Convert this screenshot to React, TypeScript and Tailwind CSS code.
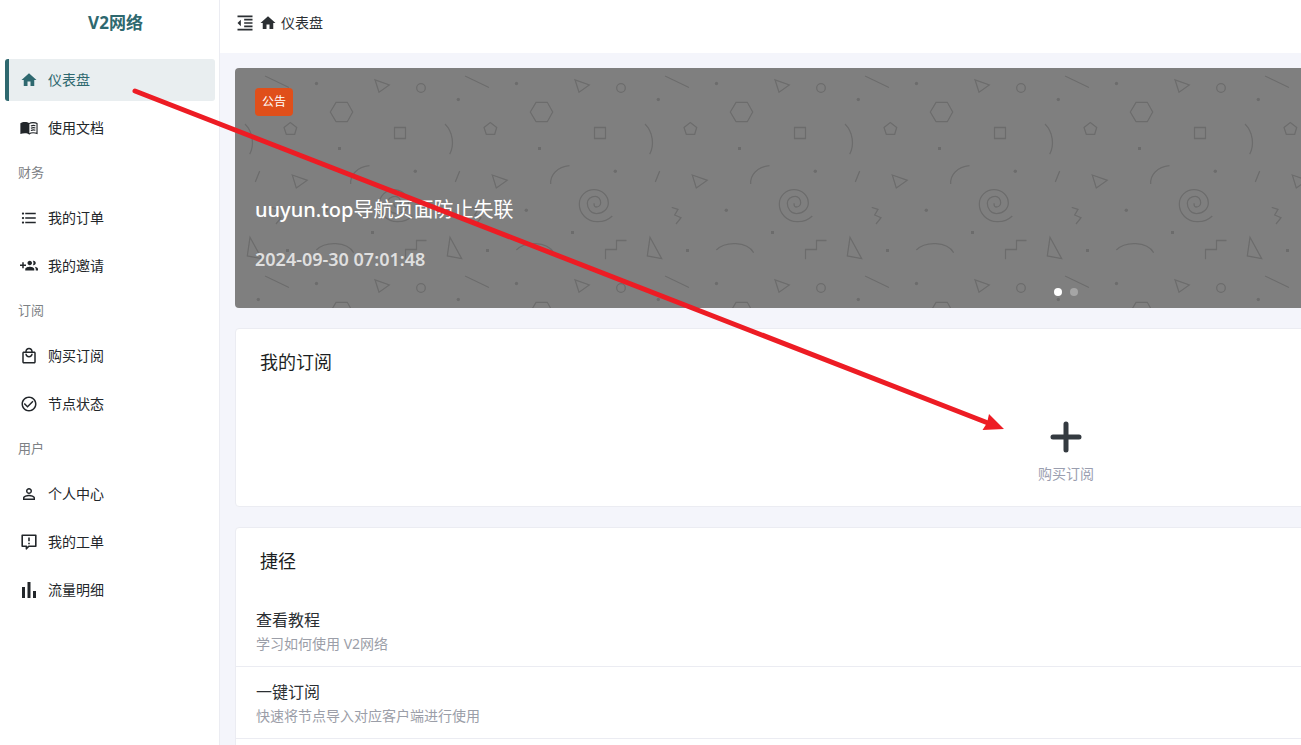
import type { ReactNode } from 'react'
import {
  MdCheckCircleOutline,
  MdFormatIndentDecrease,
  MdFormatListBulleted,
  MdHome,
  MdOutlineLocalMall,
  MdPersonOutline,
} from 'react-icons/md'

function BookIcon() {
  return (
    <svg viewBox="0 0 24 24" className="size-[18px]" fill="currentColor">
      <path d="M12.5 5.6C11 4.4 8.900 4 6.500 4S2.200 4.400 .5 5.600V20c1.600-.6 3.700-1 6-1 2.200 0 4.400.6 6 2z" />
      <path
        d="M12 6.200C13.500 5.200 15.500 4.800 17.500 4.800s4 .4 5.200 1.200v13.200c-1.400-.5-3.200-.8-5.200-.8s-4 .5-5.500 1.600"
        fill="none"
        stroke="currentColor"
        strokeWidth="1.500"
      />
      <path d="M14.500 9.300c2-.8 4.200-.9 6-.4M14.500 12.300c2-.8 4.200-.9 6-.4M14.500 15.300c2-.8 4.200-.9 6-.4" fill="none" stroke="currentColor" strokeWidth="1.500" />
    </svg>
  )
}

function InviteIcon() {
  return (
    <svg viewBox="0 0 24 24" className="size-[18px]" fill="currentColor">
      <path d="M8 10H5V7H3v3H0v2h3v3h2v-3h3v-2zm10 1c1.660 0 2.990-1.340 2.990-3S19.660 5 18 5c-.32 0-.63.05-.91.14.57.81.9 1.790.9 2.860s-.34 2.040-.9 2.860c.28.09.59.14.91.14zm-5 0c1.660 0 2.990-1.340 2.990-3S14.660 5 13 5c-1.660 0-3 1.340-3 3s1.340 3 3 3zm6.620 2.160c.83.73 1.380 1.660 1.380 2.840v2h3v-2c0-1.540-2.370-2.490-4.380-2.840zM13 13c-2 0-6 1-6 3v2h12v-2c0-2-4-3-6-3z" />
    </svg>
  )
}

function TicketIcon() {
  return (
    <svg viewBox="0 0 18 18" className="size-[18px]" fill="none" stroke="currentColor">
      <path d="M2.200 2.200h13.600v11H8.800L6.400 15.800v-2.600H2.200z" strokeWidth="1.600" strokeLinejoin="round" />
      <path d="M9 4.500v3.700M9 9.700v1.600" strokeWidth="1.600" />
    </svg>
  )
}

function TrafficIcon() {
  return (
    <svg viewBox="0 0 18 18" className="size-[18px]" fill="currentColor">
      <path d="M2 6h3v11H2zM7.500 1h3v16h-3zM13 10h3v7h-3z" />
    </svg>
  )
}

type NavItem = { label: string; icon: ReactNode; active?: boolean }

const groups: { title?: string; items: NavItem[] }[] = [
  {
    items: [
      { label: '仪表盘', icon: <MdHome size={18} />, active: true },
      { label: '使用文档', icon: <BookIcon /> },
    ],
  },
  {
    title: '财务',
    items: [
      { label: '我的订单', icon: <MdFormatListBulleted size={18} /> },
      { label: '我的邀请', icon: <InviteIcon /> },
    ],
  },
  {
    title: '订阅',
    items: [
      { label: '购买订阅', icon: <MdOutlineLocalMall size={18} /> },
      { label: '节点状态', icon: <MdCheckCircleOutline size={18} /> },
    ],
  },
  {
    title: '用户',
    items: [
      { label: '个人中心', icon: <MdPersonOutline size={18} /> },
      { label: '我的工单', icon: <TicketIcon /> },
      { label: '流量明细', icon: <TrafficIcon /> },
    ],
  },
]

const shortcuts = [
  { title: '查看教程', text: '学习如何使用 V2网络' },
  { title: '一键订阅', text: '快速将节点导入对应客户端进行使用' },
]

function Sidebar() {
  return (
    <aside className="w-[220px] shrink-0 border-r border-[#ebecf2] bg-white">
      <div className="flex h-[53px] items-center justify-center pb-2 pl-3 text-[17px] font-bold text-[#2e686f]">V2网络</div>
      <nav className="pt-[6px] pr-1 pl-[5px]">
        {groups.map((group, i) => (
          <div key={i}>
            {group.title && <div className="h-[42px] pl-[13px] pt-[5px] text-[13px] leading-6 text-[#7d8185]">{group.title}</div>}
            {group.items.map((item) => (
              <a
                key={item.label}
                href="#"
                className={
                  item.active
                    ? 'mb-[6px] flex h-[42px] items-center rounded-[3px] border-l-4 border-[#2e686f] bg-[#e9eef0] text-sm text-[#2e686f]'
                    : 'mb-[6px] flex h-[42px] items-center border-l-4 border-transparent text-sm text-[#22262a]'
                }
              >
                <span className="ml-[10px] flex w-5 justify-center">{item.icon}</span>
                <span className="ml-[9px]">{item.label}</span>
              </a>
            ))}
          </div>
        ))}
      </nav>
    </aside>
  )
}

function BannerPattern() {
  return (
    <svg className="absolute inset-0 size-full" aria-hidden="true">
      <defs>
        <pattern id="shapes" width="200" height="200" patternUnits="userSpaceOnUse">
          <g fill="none" stroke="#6c6c6c" strokeWidth="1.300">
            <path d="M30 8 54 19.500" />
            <path d="M140 11.800 154.300 17 144 24.300z" />
            <circle cx="186" cy="20" r="4.300" />
            <path d="M95.300 44 101 34.300h11.300L117.700 44l-5.400 9.700H101z" />
            <path d="M55.300 54.500 61.700 59.500 59.700 66.300h-8.400L49 59.500z" />
            <path d="M159.500 59.500h11v11h-11z" />
            <path d="M10 56C18 64 19.500 77 14.700 86.300" />
            <path d="M134.500 97.700C122 99 115 107 115.700 116" />
            <path d="M24.700 103 20.300 114" />
            <path d="M57.300 107 72.300 112.300 61.300 120z" />
            <path d="M159 135.300A2 3.700 0 0 0 161 139A4.700 4.300 0 0 0 165.700 134.700A5.400 6.400 0 0 0 160.300 128.300A8 7 0 0 0 152.300 135.300A9.200 10.400 0 0 0 161.500 145.700A11.800 10.700 0 0 0 173.300 135A14.300 13.300 0 0 0 159 121.700A14.700 14.300 0 0 0 144.300 136A17.700 17.700 0 0 0 162 153.700Q171 154 177.300 148" />
            <path d="M36.700 139.300 43 141.300 39.700 147 46 149.700 41 156" />
            <path d="M81.300 182C90 173 112 173 118.700 184.700" />
            <path d="M170.500 191.300v-9.800h11v-9h10" />
            <path d="M15 169.300 26.700 190.700 12.300 188z" />
          </g>
          <g fill="#6c6c6c">
            <circle cx="81.500" cy="15.500" r="1.700" />
            <circle cx="23.300" cy="31.500" r="1.700" />
            <circle cx="180.300" cy="103.300" r="1.700" />
            <circle cx="91.300" cy="142.300" r="1.700" />
            <path d="M103 79h3v3h-3zM136 163h3v3h-3zM51 181h3v3h-3z" />
          </g>
        </pattern>
      </defs>
      <rect width="100%" height="100%" fill="url(#shapes)" />
    </svg>
  )
}

function Banner() {
  return (
    <section className="relative h-60 overflow-hidden rounded bg-[#7f7f7f] p-5">
      <BannerPattern />
      <div className="relative">
        <div className="flex h-7 w-[38px] items-center justify-center rounded-sm bg-[#e04f1a] text-xs text-white">公告</div>
        <h1 className="mt-20 text-xl leading-7 text-white">
          <span className="font-medium">uuyun.top</span>导航页面防止失联
        </h1>
        <p className="mt-[23px] text-lg leading-6 font-semibold text-[#dfdfdf]">2024-09-30 07:01:48</p>
      </div>
      <div className="absolute inset-x-0 bottom-3 flex justify-center gap-2">
        <button type="button" aria-label="1" className="size-2 rounded-full bg-white" />
        <button type="button" aria-label="2" className="size-2 rounded-full bg-[#a5a5a5]" />
      </div>
    </section>
  )
}

function Card({ title, children }: { title: string; children: ReactNode }) {
  return (
    <section className="mt-5 rounded border border-[#ebecf2] bg-white">
      <h2 className="px-6 pt-[19px] text-lg leading-7 text-[#1c1f22]">{title}</h2>
      {children}
    </section>
  )
}

function Arrow() {
  return (
    <svg className="pointer-events-none absolute top-0 left-0 h-[745px] w-[1301px]" viewBox="0 0 1301 745" aria-hidden="true">
      <path d="M135 91 988 423" stroke="#ed1c24" strokeWidth="5" strokeLinecap="round" />
      <path d="M1004 429 989 414 987 423 982.500 430z" fill="#ed1c24" />
    </svg>
  )
}

export default function App() {
  return (
    <div className="relative flex h-screen overflow-hidden bg-[#f4f5fb] font-['Noto_Sans','Noto_Sans_CJK_SC',sans-serif]">
      <Sidebar />
      {/* the dashboard is wider than small windows and runs off to the right */}
      <div className="min-w-[1692px] flex-1">
        <header className="flex h-[53px] items-center bg-white pb-2 pl-[15px] text-sm text-[#2b2f33]">
          <button type="button" aria-label="菜单" className="flex w-5 justify-center">
            <MdFormatIndentDecrease size={20} />
          </button>
          <MdHome size={18} className="mx-1" />
          <span>仪表盘</span>
        </header>
        <main className="p-[15px]">
          <Banner />
          <Card title="我的订阅">
            <a href="#" className="flex flex-col items-center pt-[45px] pb-[21px]">
              <svg viewBox="0 0 32 32" className="size-8" stroke="#343a40" strokeWidth="5" strokeLinecap="round">
                <path d="M16 3v26M3 16h26" />
              </svg>
              <span className="mt-[10px] text-sm leading-[22px] text-[#9a9eaf]">购买订阅</span>
            </a>
          </Card>
          <Card title="捷径">
            <div className="pt-5">
              {shortcuts.map((item) => (
                <a key={item.title} href="#" className="block h-[72px] border-b border-[#ebecf2] px-5 pt-[13px]">
                  <div className="leading-6 text-[#2b2f33]">{item.title}</div>
                  <div className="text-sm leading-6 text-[#9b9ea8]">{item.text}</div>
                </a>
              ))}
            </div>
            <div className="h-[72px]" />
          </Card>
        </main>
      </div>
      <Arrow />
    </div>
  )
}
